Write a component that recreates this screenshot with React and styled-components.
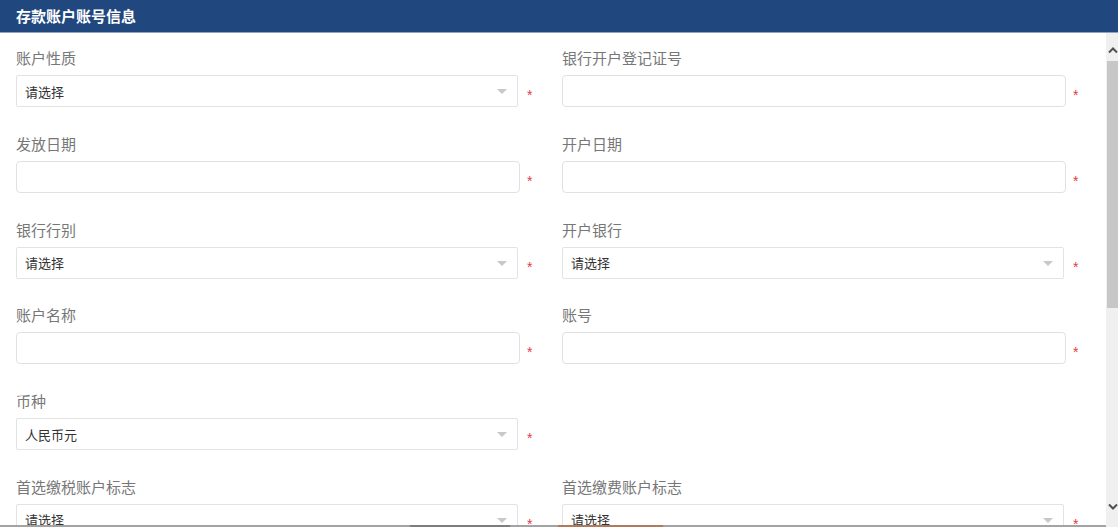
import React from "react";
import styled, { createGlobalStyle } from "styled-components";

const Global = createGlobalStyle`
  html, body { margin: 0; padding: 0; background: #fff; }
  body { font-family: "Noto Sans CJK SC", "Noto Sans", sans-serif; overflow: hidden; }
  * { box-sizing: border-box; }
`;

const Page = styled.div`
  width: 1118px;
  height: 527px;
  display: flex;
  flex-direction: column;
  overflow: hidden;
`;

const Header = styled.div`
  height: 33px;
  flex: none;
  background: #21477f;
  border-bottom: 1px solid #8fa3bf;
  color: #fff;
  font-size: 15px;
  font-weight: 700;
  line-height: 32px;
  padding-left: 16px;
`;

const Main = styled.div`
  flex: 1;
  display: flex;
  min-height: 0;
`;

const LeftCol = styled.div`
  flex: 1;
  display: flex;
  flex-direction: column;
  min-width: 0;
`;

const Content = styled.div`
  flex: 1;
  overflow: hidden;
  padding: 15px 0 0 16px;
`;

const Grid = styled.div`
  display: grid;
  grid-template-columns: 530px 530px;
  column-gap: 16px;
  row-gap: 26.8px;
`;

const Field = styled.div`
  display: flex;
  flex-direction: column;
`;

const Label = styled.div`
  font-size: 15px;
  line-height: 20px;
  color: #777;
  margin-bottom: 7px;
`;

const ControlRow = styled.div`
  display: flex;
  align-items: flex-start;
`;

const ControlWrap = styled.div`
  width: 504px;
  flex: none;
`;

const TextInput = styled.div`
  width: 504px;
  height: 32px;
  border: 1px solid #e1e1e1;
  border-radius: 4px;
  background: #fff;
`;

const Select = styled.div`
  width: 502px;
  height: 32px;
  border: 1px solid #e3e3e3;
  border-radius: 2px;
  background: #fff;
  display: flex;
  align-items: center;
  justify-content: space-between;
  padding: 0 10px 0 8px;
  font-size: 13px;
  color: #333;
`;

const Arrow = styled.span`
  width: 0;
  height: 0;
  border-left: 5px solid transparent;
  border-right: 5px solid transparent;
  border-top: 5px solid #c8c8c8;
  margin-top: 1px;
`;

const Required = styled.span`
  color: #e4393c;
  font-family: "Liberation Sans", Arial, sans-serif;
  font-size: 14px;
  line-height: 14px;
  margin: 13px 0 0 7px;
`;

const FooterLine = styled.div`
  height: 2px;
  flex: none;
  display: flex;
  background: #a3a3a3;
`;

const Segment = styled.div`
  width: ${(p) => p.$w}px;
  background: ${(p) => p.$c};
`;

const Scrollbar = styled.div`
  width: 12px;
  flex: none;
  background: #f0f0f0;
  display: flex;
  flex-direction: column;
  padding-left: 1px;
`;

const ScrollButton = styled.div`
  height: ${(p) => p.$h}px;
  display: flex;
  justify-content: center;
  align-items: flex-start;
  padding-top: ${(p) => p.$pt}px;
  flex: none;
`;

const Thumb = styled.div`
  height: 247px;
  background: #c7c7c7;
  flex: none;
`;

const Spacer = styled.div`
  flex: 1;
`;

const rows = [
  [
    { label: "账户性质", type: "select", value: "请选择" },
    { label: "银行开户登记证号", type: "input" },
  ],
  [
    { label: "发放日期", type: "input" },
    { label: "开户日期", type: "input" },
  ],
  [
    { label: "银行行别", type: "select", value: "请选择" },
    { label: "开户银行", type: "select", value: "请选择" },
  ],
  [
    { label: "账户名称", type: "input" },
    { label: "账号", type: "input" },
  ],
  [{ label: "币种", type: "select", value: "人民币元" }, null],
  [
    { label: "首选缴税账户标志", type: "select", value: "请选择" },
    { label: "首选缴费账户标志", type: "select", value: "请选择" },
  ],
];

function FormField({ f }) {
  if (!f) return <div />;
  return (
    <Field>
      <Label>{f.label}</Label>
      <ControlRow>
        <ControlWrap>
          {f.type === "select" ? (
            <Select>
              <span>{f.value}</span>
              <Arrow />
            </Select>
          ) : (
            <TextInput />
          )}
        </ControlWrap>
        <Required>*</Required>
      </ControlRow>
    </Field>
  );
}

const Chevron = ({ up }) => (
  <svg width="10" height="8" viewBox="0 0 10 8">
    <path
      d={up ? "M1 6.5 L5 2.5 L9 6.5" : "M1 1.5 L5 5.5 L9 1.5"}
      fill="none"
      stroke="#505050"
      strokeWidth="2"
    />
  </svg>
);

export default function App() {
  return (
    <>
      <Global />
      <Page>
        <Header>存款账户账号信息</Header>
        <Main>
          <LeftCol>
            <Content>
              <Grid>
                {rows.flat().map((f, i) => (
                  <FormField key={i} f={f} />
                ))}
              </Grid>
            </Content>
            <FooterLine>
              <Segment $w={410} $c="#a3a3a3" />
              <Segment $w={100} $c="#7d7d7d" />
              <Segment $w={48} $c="#a3a3a3" />
              <Segment $w={105} $c="#b07a5c" />
            </FooterLine>
          </LeftCol>
          <Scrollbar>
            <ScrollButton $h={28} $pt={13}>
              <Chevron up />
            </ScrollButton>
            <Thumb />
            <Spacer />
            <ScrollButton $h={40} $pt={16}>
              <Chevron />
            </ScrollButton>
          </Scrollbar>
        </Main>
      </Page>
    </>
  );
}
